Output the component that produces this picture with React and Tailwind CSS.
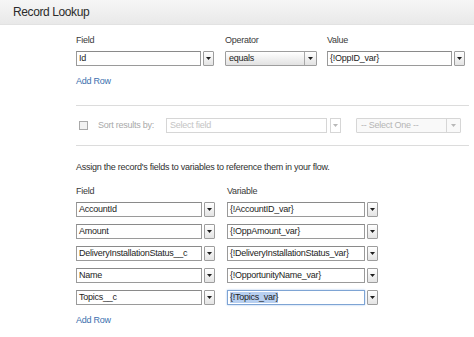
import clsx from 'clsx';

function Caret({ muted }) {
  return (
    <svg width="5" height="3" viewBox="0 0 5 3">
      <path d="M0 0h5L2.5 3z" fill={muted ? '#b8b8b8' : '#1f1f1f'} />
    </svg>
  );
}

function DropBtn() {
  return (
    <div className="flex h-[15px] w-[11px] items-center justify-center rounded-[1px] border border-[#9d9d9d] bg-gradient-to-b from-white to-[#e4e4e4]">
      <Caret />
    </div>
  );
}

function Lookup({ value, width, focused }) {
  return (
    <div className="flex items-center gap-[2px]">
      <div
        className={clsx(
          'flex h-[15px] items-center border bg-white px-[2px] text-[9px] tracking-[-0.25px] text-[#1d1d1d]',
          width,
          focused ? 'border-[#7ea4d4] shadow-[0_0_2px_#a9c8ee]' : 'border-[#9a9a9a] border-t-[#8a8a8a]'
        )}
      >
        {focused ? <span className="bg-[#b7cff0] leading-[11px]">{value}</span> : value}
      </div>
      <DropBtn />
    </div>
  );
}

export default function App() {
  const rows = [
    ['AccountId', '{!AccountID_var}'],
    ['Amount', '{!OppAmount_var}'],
    ['DeliveryInstallationStatus__c', '{!DeliveryInstallationStatus_var}'],
    ['Name', '{!OpportunityName_var}'],
    ['Topics__c', '{!Topics_var}'],
  ];

  return (
    <div className="h-[337px] w-[474px] overflow-hidden bg-white font-['Liberation_Sans',Arial,sans-serif] text-[#3a3a3a]">
      <div className="flex h-[25px] items-center border-b border-[#e2e2e2] bg-gradient-to-b from-[#f6f6f6] to-[#e9e9e9] pl-[13px] text-[12px] tracking-[-0.4px] text-[#2b2b2b]">
        Record Lookup
      </div>

      <div className="pl-[76px] text-[9px] tracking-[-0.25px]">
        {/* filter */}
        <div className="mt-[10px] flex">
          <div className="w-[149px]">
            <div className="h-[11px] leading-[11px]">Field</div>
            <div className="mt-[5px]">
              <Lookup value="Id" width="w-[125px]" />
            </div>
          </div>
          <div className="w-[102px]">
            <div className="h-[11px] leading-[11px]">Operator</div>
            <div className="mt-[5px] flex h-[15px] w-[92px] items-center rounded-[1px] border border-[#9d9d9d] bg-gradient-to-b from-white to-[#e2e2e2] text-[#1d1d1d]">
              <span className="flex-1 pl-[3px]">equals</span>
              <span className="flex h-full w-[12px] items-center justify-center border-l border-[#a8a8a8]">
                <Caret />
              </span>
            </div>
          </div>
          <div>
            <div className="h-[11px] leading-[11px]">Value</div>
            <div className="mt-[5px]">
              <Lookup value="{!OppID_var}" width="w-[125px]" />
            </div>
          </div>
        </div>
        <div className="mt-[10px] h-[11px] leading-[11px] text-[#3b6fae]">Add Row</div>

        {/* sort */}
        <div className="mt-[18px] mr-[5px] border-y border-[#dcdcdc] py-[12px]">
          <div className="flex h-[15px] items-center text-[#a9a9a9]">
            <span className="ml-[3px] h-[9px] w-[9px] border border-[#a9a9a9] bg-[#f2f2f2]" />
            <span className="ml-[10px] w-[68px]">Sort results by:</span>
            <span className="flex h-full w-[161px] items-center border border-[#d6d6d6] pl-[3px] text-[#c4c4c4]">
              Select field
            </span>
            <span className="ml-[3px] flex h-full w-[11px] items-center justify-center border border-[#d6d6d6]">
              <Caret muted />
            </span>
            <span className="ml-[15px] flex h-full w-[105px] items-center rounded-[1px] border border-[#d6d6d6] bg-[#f9f9f9] text-[#b5b5b5]">
              <span className="flex-1 pl-[4px]">-- Select One --</span>
              <span className="flex h-full w-[14px] items-center justify-center border-l border-[#d6d6d6]">
                <Caret muted />
              </span>
            </span>
          </div>
        </div>

        {/* outputs */}
        <div className="mt-[16px] h-[11px] leading-[11px] text-[#2f2f2f]">
          Assign the record's fields to variables to reference them in your flow.
        </div>
        <div className="mt-[13px] flex h-[11px] leading-[11px]">
          <span className="w-[151px]">Field</span>
          <span>Variable</span>
        </div>
        <div className="mt-[5px] flex flex-col gap-[7px]">
          {rows.map(([field, variable], i) => (
            <div key={field} className="flex gap-[12px]">
              <Lookup value={field} width="w-[126px]" />
              <Lookup value={variable} width="w-[138px]" focused={i === rows.length - 1} />
            </div>
          ))}
        </div>
        <div className="mt-[10px] h-[11px] leading-[11px] text-[#3b6fae]">Add Row</div>
      </div>
    </div>
  );
}
